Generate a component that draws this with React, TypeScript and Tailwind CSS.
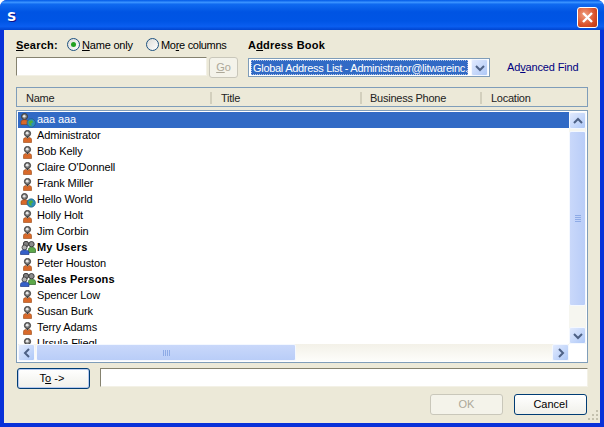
import React from 'react';

type Kind = 'user' | 'globe' | 'group';

const people: { name: string; kind: Kind; selected?: boolean }[] = [
  { name: 'aaa aaa', kind: 'globe', selected: true },
  { name: 'Administrator', kind: 'user' },
  { name: 'Bob Kelly', kind: 'user' },
  { name: "Claire O'Donnell", kind: 'user' },
  { name: 'Frank Miller', kind: 'user' },
  { name: 'Hello World', kind: 'globe' },
  { name: 'Holly Holt', kind: 'user' },
  { name: 'Jim Corbin', kind: 'user' },
  { name: 'My Users', kind: 'group' },
  { name: 'Peter Houston', kind: 'user' },
  { name: 'Sales Persons', kind: 'group' },
  { name: 'Spencer Low', kind: 'user' },
  { name: 'Susan Burk', kind: 'user' },
  { name: 'Terry Adams', kind: 'user' },
  { name: 'Ursula Fliegl', kind: 'user' },
];

const ContactIcon = ({ kind }: { kind: Kind }) => {
  if (kind === 'group') {
    return (
      <svg width="16" height="14" viewBox="0 0 16 14" className="shrink-0">
        <circle cx="6" cy="3" r="2.700" fill="#7d7d7d" stroke="#333" strokeWidth="0.9" />
        <circle cx="11.500" cy="3.200" r="2.700" fill="#8c8c8c" stroke="#333" strokeWidth="0.9" />
        <path d="M8.500 11.500V8.500c0-1.500 1.200-2.200 3-2.200s4 .7 4 2.200v3z" fill="#5da84a" stroke="#2f5f2a" strokeWidth="0.7" />
        <circle cx="4.500" cy="6.500" r="2.500" fill="#b0b0b0" stroke="#333" strokeWidth="0.8" />
        <path d="M0.500 13.500V11.500c0-1.500 1.300-2.500 4-2.500s4.500 1 4.500 2.500v2z" fill="#3560c8" stroke="#203a86" strokeWidth="0.7" />
      </svg>
    );
  }
  if (kind === 'globe') {
    return (
      <svg width="16" height="15" viewBox="0 0 16 15" className="shrink-0">
        <circle cx="4.500" cy="3.500" r="3" fill="#808080" stroke="#333" strokeWidth="0.9" />
        <circle cx="4.200" cy="3.200" r="1.300" fill="#e6e6e6" />
        <path d="M1 11.500V9c0-1.500 1.500-2.300 3.500-2.300S8.500 7.500 8.500 9v2.500z" fill="#d9692a" stroke="#8c3f12" strokeWidth="0.6" />
        <circle cx="11.200" cy="10" r="4.200" fill="#2d8fb8" stroke="#1c5c7a" strokeWidth="0.6" />
        <path d="M9 8l3-.8 1.200 2-2 1 .5 2.800-2-1-1.200-2.800z" fill="#4fae3c" />
      </svg>
    );
  }
  return (
    <svg width="9" height="13" viewBox="0 0 9 13" className="shrink-0">
      <circle cx="4.500" cy="3.500" r="3.100" fill="#7d7d7d" stroke="#333" strokeWidth="0.9" />
      <circle cx="4.200" cy="3.200" r="1.400" fill="#e6e6e6" />
      <path d="M0.500 12.500V9.500c0-1.300 1.300-2 2.500-2l1.500 1.200L6 7.500c1.200 0 2.500.7 2.500 2v3z" fill="#d9692a" stroke="#97470f" strokeWidth="0.6" />
      <path d="M3 6.500h3l-1.500 2z" fill="#333" />
    </svg>
  );
};

const Radio = ({ checked }: { checked?: boolean }) => (
  <span className="flex h-[13px] w-[13px] shrink-0 items-center justify-center rounded-full border border-[#1c5180] bg-[linear-gradient(135deg,#dcdcd7,#ffffff)]">
    {checked && <span className="h-[5px] w-[5px] rounded-full bg-[#21a121]" />}
  </span>
);

const Chevron = ({ dir }: { dir: 'up' | 'down' | 'left' | 'right' }) => {
  const d = {
    up: 'M1 6l4-4 4 4',
    down: 'M1 2l4 4 4-4',
    left: 'M6 1L2 5l4 4',
    right: 'M2 1l4 4-4 4',
  }[dir];
  const vertical = dir === 'up' || dir === 'down';
  return (
    <svg viewBox={vertical ? '0 0 10 8' : '0 0 8 10'} className={vertical ? 'h-[8px] w-[10px]' : 'h-[10px] w-[8px]'}>
      <path d={d} fill="none" stroke="#4d6185" strokeWidth="2" />
    </svg>
  );
};

const ScrollButton = ({ dir }: { dir: 'up' | 'down' | 'left' | 'right' }) => (
  <div className="flex h-[17px] w-[17px] shrink-0 items-center justify-center rounded-[2px] border border-[#f4f8ff] bg-[linear-gradient(135deg,#e1eafe,#aec8f7)]">
    <Chevron dir={dir} />
  </div>
);

const App: React.FC = () => {
  return (
    <div className="flex h-[427px] w-[604px] flex-col overflow-hidden rounded-t-[7px] bg-[#0831d9] font-['Liberation_Sans',sans-serif] text-[11px] text-black">
      {/* title bar */}
      <div className="flex h-[30px] shrink-0 items-center justify-between bg-[linear-gradient(180deg,#0058e6_0%,#3a93ff_8%,#0f6af0_14%,#0054e3_40%,#0055e5_70%,#0a5ef0_88%,#0044cf_100%)] pl-[7px] pr-[6px]">
        <span className="mt-[3px] font-['DejaVu_Sans',sans-serif] text-[13px] font-bold text-white [text-shadow:1px_1px_#0f1089]">S</span>
        <div className="mt-[4px] flex h-[21px] w-[21px] items-center justify-center rounded-[3px] border border-white bg-[radial-gradient(circle_at_35%_35%,#f0a080,#d9502a_60%,#b8340f)]">
          <svg width="13" height="13" viewBox="0 0 13 13">
            <path d="M2 2l9 9M11 2l-9 9" stroke="#fff" strokeWidth="2.400" />
          </svg>
        </div>
      </div>

      {/* dialog body */}
      <div className="relative mx-[4px] mb-[4px] flex min-h-0 flex-1 flex-col bg-[#ece9d8] px-[12px]">
        {/* search row */}
        <div className="flex h-[25px] items-end pb-[2px]">
          <div className="flex w-[232px] items-center">
            <span className="w-[51px] font-bold tracking-[0.2px]">
              <u>S</u>earch:
            </span>
            <span className="flex w-[79px] items-center gap-[2px]">
              <Radio checked />
              <span className="tracking-[-0.2px]">
                <u>N</u>ame only
              </span>
            </span>
            <span className="flex items-center gap-[2px]">
              <Radio />
              <span className="tracking-[-0.3px]">
                Mo<u>r</u>e columns
              </span>
            </span>
          </div>
          <span className="font-bold tracking-[0.2px]">
            A<u>d</u>dress Book
          </span>
        </div>

        <div className="mt-[2px] flex h-[21px] items-start">
          <div className="h-[19px] w-[191px] border border-[#f3f1e6] border-l-[#85826f] border-t-[#85826f] bg-white" />
          <div className="ml-[2px] flex h-[21px] w-[29px] items-center justify-center rounded-[3px] border border-[#c9c7ba] bg-[#f4f3ea] text-[#aca899]">
            <span>
              <u>G</u>o
            </span>
          </div>
          <div className="ml-[10px] mt-[1px] flex h-[19px] w-[242px] items-center border border-[#7f9db9] bg-white p-[1px]">
            <div className="ml-[1px] mr-[3px] h-[15px] min-w-0 flex-1 overflow-hidden whitespace-nowrap bg-[#316ac5] pl-[2px] pt-[1px] leading-[14px] tracking-[-0.3px] text-white outline-1 -outline-offset-1 outline-dotted outline-white/60">
              Global Address List - Administrator@litwareinc.com
            </div>
            <ScrollButton dir="down" />
          </div>
          <span className="ml-[17px] self-center tracking-[-0.15px] text-[#000080]">
            Ad<u>v</u>anced Find
          </span>
        </div>

        {/* column headers */}
        <div className="mt-[9px] flex h-[20px] items-center border border-[#7f9db9] bg-[#ece9d8] pt-[2px] tracking-[-0.25px] text-[#222]">
          <span className="w-[193px] pl-[9px]">Name</span>
          <span className="h-[12px] w-[2px] bg-[#d2cfbd]" />
          <span className="w-[148px] pl-[9px]">Title</span>
          <span className="h-[12px] w-[2px] bg-[#d2cfbd]" />
          <span className="w-[118px] pl-[8px]">Business Phone</span>
          <span className="h-[12px] w-[2px] bg-[#d2cfbd]" />
          <span className="pl-[9px]">Location</span>
        </div>

        {/* contact list */}
        <div className="mt-[3px] flex h-[253px] flex-col border border-[#7f9db9] bg-white p-[1px]">
          <div className="flex min-h-0 flex-1">
            <div className="min-w-0 flex-1 overflow-hidden">
              {people.map((p) => (
                <div
                  key={p.name}
                  className={`flex h-[16px] items-center ${p.selected ? 'bg-[#316ac5] text-white' : ''} ${p.kind === 'group' ? 'font-bold tracking-[0.2px]' : 'tracking-[-0.1px]'}`}
                >
                  <span className="flex w-[19px] shrink-0 justify-center">
                    <ContactIcon kind={p.kind} />
                  </span>
                  <span className="pb-[2px]">{p.name}</span>
                </div>
              ))}
            </div>
            {/* vertical scrollbar */}
            <div className="flex w-[17px] shrink-0 flex-col bg-[#f6f6f0]">
              <ScrollButton dir="up" />
              <div className="mt-[2px] flex h-[175px] items-center justify-center rounded-[2px] border border-[#f4f8ff] bg-[linear-gradient(90deg,#c9d8fa,#b9cdf8)]">
                <div className="flex flex-col gap-[1px]">
                  <span className="h-[1px] w-[6px] bg-[#8eabe6]" />
                  <span className="h-[1px] w-[6px] bg-[#8eabe6]" />
                  <span className="h-[1px] w-[6px] bg-[#8eabe6]" />
                  <span className="h-[1px] w-[6px] bg-[#8eabe6]" />
                </div>
              </div>
              <div className="flex-1" />
              <ScrollButton dir="down" />
            </div>
          </div>
          {/* horizontal scrollbar */}
          <div className="flex h-[17px] shrink-0 pr-[17px]">
            <div className="flex flex-1 bg-[linear-gradient(180deg,#f3f1e8,#fdfdfa)]">
              <ScrollButton dir="left" />
              <div className="ml-[1px] flex w-[260px] items-center justify-center rounded-[2px] border border-[#f4f8ff] bg-[linear-gradient(180deg,#c9d8fa,#b9cdf8)]">
                <div className="flex gap-[1px]">
                  <span className="h-[6px] w-[1px] bg-[#8eabe6]" />
                  <span className="h-[6px] w-[1px] bg-[#8eabe6]" />
                  <span className="h-[6px] w-[1px] bg-[#8eabe6]" />
                  <span className="h-[6px] w-[1px] bg-[#8eabe6]" />
                </div>
              </div>
              <div className="flex-1" />
              <ScrollButton dir="right" />
            </div>
          </div>
        </div>

        {/* recipients */}
        <div className="mt-[5px] flex items-start pl-[1px]">
          <div className="flex h-[21px] w-[73px] items-center justify-center rounded-[3px] border border-[#003c74] bg-[linear-gradient(180deg,#ffffff,#f0f0ea)] shadow-[inset_0_0_0_1px_#b5c9ef]">
            <span className="mr-[3px]">
              T<u>o</u> -&gt;
            </span>
          </div>
          <div className="ml-[10px] h-[19px] flex-1 border border-[#f3f1e6] border-l-[#85826f] border-t-[#85826f] bg-white" />
        </div>

        {/* buttons */}
        <div className="mt-[5px] flex justify-end gap-[11px] pr-[1px]">
          <div className="flex h-[21px] w-[73px] items-center justify-center rounded-[3px] border border-[#c9c7ba] bg-[#f4f3ea] text-[#aca899]">
            OK
          </div>
          <div className="flex h-[21px] w-[73px] items-center justify-center rounded-[3px] border border-[#003c74] bg-[linear-gradient(180deg,#ffffff,#f0f0ea)]">
            Cancel
          </div>
        </div>

        {/* resize grip */}
        <svg width="11" height="11" viewBox="0 0 11 11" className="absolute bottom-[2px] right-[1px]">
          <path d="M8 0h2v2H8zM4 4h2v2H4zM8 4h2v2H8zM0 8h2v2H0zM4 8h2v2H4zM8 8h2v2H8z" fill="#c4c1ae" />
        </svg>
      </div>
    </div>
  );
};

export default App;
